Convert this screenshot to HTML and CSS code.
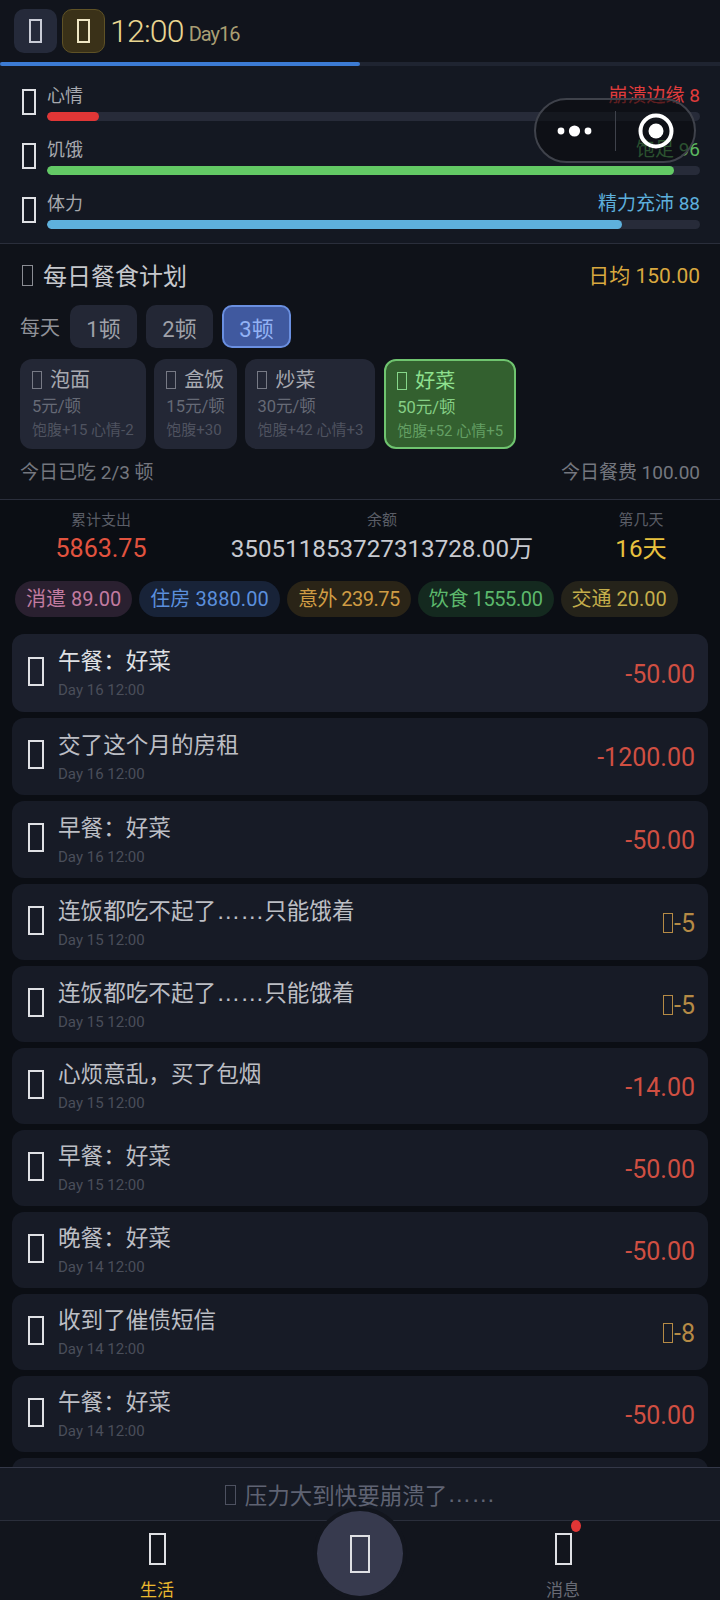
FILE: index.html
```html
<!DOCTYPE html>
<html lang="zh-CN">
<head>
    <meta charset="UTF-8">
    <meta name="viewport" content="width=device-width, initial-scale=1.0">
    <title>生活</title>
    <link rel="stylesheet" href="styles.css">
</head>
<body>
<div class="app">
    <header class="topbar">
        <div class="top-btn"><span class="tofu tofu-top"></span></div>
        <div class="top-btn top-btn-gold"><span class="tofu tofu-top tofu-warm"></span></div>
        <span class="clock">12:00</span>
        <span class="day">Day16</span>
    </header>
    <div class="progress"><div class="progress-fill" style="width: 50%"></div></div>

    <section class="stats">
        <div class="stat">
            <span class="tofu tofu-stat"></span>
            <div class="stat-body">
                <div class="stat-head"><span class="stat-name">心情</span><span class="red">崩溃边缘 8</span></div>
                <div class="bar"><div class="bar-fill fill-red" style="width: 8%"></div></div>
            </div>
        </div>
        <div class="stat">
            <span class="tofu tofu-stat"></span>
            <div class="stat-body">
                <div class="stat-head"><span class="stat-name">饥饿</span><span class="green">饱足 96</span></div>
                <div class="bar"><div class="bar-fill fill-green" style="width: 96%"></div></div>
            </div>
        </div>
        <div class="stat">
            <span class="tofu tofu-stat"></span>
            <div class="stat-body">
                <div class="stat-head"><span class="stat-name">体力</span><span class="blue">精力充沛 88</span></div>
                <div class="bar"><div class="bar-fill fill-blue" style="width: 88%"></div></div>
            </div>
        </div>
    </section>

    <section class="meals">
        <div class="meals-head">
            <h2 class="meals-title"><span class="tofu tofu-title"></span>每日餐食计划</h2>
            <span class="meals-avg">日均 150.00</span>
        </div>
        <div class="freq">
            <span class="freq-label">每天</span>
            <div class="freq-btn">1顿</div>
            <div class="freq-btn">2顿</div>
            <div class="freq-btn freq-on">3顿</div>
        </div>
        <div class="cards">
            <div class="card">
                <div class="card-name"><span class="tofu tofu-card"></span>泡面</div>
                <div class="card-price">5元/顿</div>
                <div class="card-effect">饱腹+15 心情-2</div>
            </div>
            <div class="card">
                <div class="card-name"><span class="tofu tofu-card"></span>盒饭</div>
                <div class="card-price">15元/顿</div>
                <div class="card-effect">饱腹+30</div>
            </div>
            <div class="card">
                <div class="card-name"><span class="tofu tofu-card"></span>炒菜</div>
                <div class="card-price">30元/顿</div>
                <div class="card-effect">饱腹+42 心情+3</div>
            </div>
            <div class="card card-on">
                <div class="card-name"><span class="tofu tofu-card"></span>好菜</div>
                <div class="card-price">50元/顿</div>
                <div class="card-effect">饱腹+52 心情+5</div>
            </div>
        </div>
        <div class="meals-foot">
            <span>今日已吃 2/3 顿</span>
            <span>今日餐费 100.00</span>
        </div>
    </section>

    <section class="summary">
        <div class="sum-col sum-spent">
            <div class="sum-label">累计支出</div>
            <div class="sum-value red-soft">5863.75</div>
        </div>
        <div class="sum-col sum-balance">
            <div class="sum-label">余额</div>
            <div class="sum-value">350511853727313728.00万</div>
        </div>
        <div class="sum-col sum-day">
            <div class="sum-label">第几天</div>
            <div class="sum-value yellow">16天</div>
        </div>
    </section>

    <div class="chips">
        <span class="chip chip-pink">消遣 89.00</span>
        <span class="chip chip-blue">住房 3880.00</span>
        <span class="chip chip-amber">意外 239.75</span>
        <span class="chip chip-green">饮食 1555.00</span>
        <span class="chip chip-olive">交通 20.00</span>
    </div>

    <main class="log">
        <div class="row row-first">
            <span class="tofu tofu-row"></span>
            <div class="row-text"><div class="row-title">午餐：好菜</div><div class="row-time">Day 16 12:00</div></div>
            <span class="row-amt">-50.00</span>
        </div>
        <div class="row row-tall">
            <span class="tofu tofu-row"></span>
            <div class="row-text"><div class="row-title">交了这个月的房租</div><div class="row-time">Day 16 12:00</div></div>
            <span class="row-amt">-1200.00</span>
        </div>
        <div class="row row-tall">
            <span class="tofu tofu-row"></span>
            <div class="row-text"><div class="row-title">早餐：好菜</div><div class="row-time">Day 16 12:00</div></div>
            <span class="row-amt">-50.00</span>
        </div>
        <div class="row">
            <span class="tofu tofu-row"></span>
            <div class="row-text"><div class="row-title">连饭都吃不起了<span class="dots">……</span>只能饿着</div><div class="row-time">Day 15 12:00</div></div>
            <span class="row-amt row-mood"><span class="tofu tofu-mood"></span>-5</span>
        </div>
        <div class="row">
            <span class="tofu tofu-row"></span>
            <div class="row-text"><div class="row-title">连饭都吃不起了<span class="dots">……</span>只能饿着</div><div class="row-time">Day 15 12:00</div></div>
            <span class="row-amt row-mood"><span class="tofu tofu-mood"></span>-5</span>
        </div>
        <div class="row">
            <span class="tofu tofu-row"></span>
            <div class="row-text"><div class="row-title">心烦意乱，买了包烟</div><div class="row-time">Day 15 12:00</div></div>
            <span class="row-amt">-14.00</span>
        </div>
        <div class="row">
            <span class="tofu tofu-row"></span>
            <div class="row-text"><div class="row-title">早餐：好菜</div><div class="row-time">Day 15 12:00</div></div>
            <span class="row-amt">-50.00</span>
        </div>
        <div class="row">
            <span class="tofu tofu-row"></span>
            <div class="row-text"><div class="row-title">晚餐：好菜</div><div class="row-time">Day 14 12:00</div></div>
            <span class="row-amt">-50.00</span>
        </div>
        <div class="row">
            <span class="tofu tofu-row"></span>
            <div class="row-text"><div class="row-title">收到了催债短信</div><div class="row-time">Day 14 12:00</div></div>
            <span class="row-amt row-mood"><span class="tofu tofu-mood"></span>-8</span>
        </div>
        <div class="row">
            <span class="tofu tofu-row"></span>
            <div class="row-text"><div class="row-title">午餐：好菜</div><div class="row-time">Day 14 12:00</div></div>
            <span class="row-amt">-50.00</span>
        </div>
        <div class="row"></div>
    </main>

    <div class="toast"><span class="tofu tofu-toast"></span>压力大到快要崩溃了<span class="dots">……</span></div>

    <nav class="tabs">
        <div class="tab tab-on"><span class="tofu tofu-tab"></span><span class="tab-label">生活</span></div>
        <div class="tab-gap"></div>
        <div class="tab">
            <span class="tofu tofu-tab"></span><span class="tab-label">消息</span>
            <span class="tab-dot"></span>
        </div>
    </nav>
    <div class="tab-center"><span class="tofu tofu-center"></span></div>

    <div class="capsule">
        <svg class="capsule-dots" viewBox="0 0 36 12" width="36" height="12"><circle cx="4" cy="6" r="3.4" fill="#fff"/><circle cx="17.5" cy="6" r="5.6" fill="#fff"/><circle cx="31" cy="6" r="3.4" fill="#fff"/></svg>
        <span class="capsule-line"></span>
        <svg class="capsule-target" viewBox="0 0 36 36" width="36" height="36"><circle cx="18" cy="18" r="15.5" fill="none" stroke="#fff" stroke-width="4"/><circle cx="18" cy="18" r="7.5" fill="#fff"/></svg>
    </div>
</div>
</body>
</html>
```

FILE: styles.css
```css
* {
    box-sizing: border-box;
}
body {
    margin: 0;
    background-color: #0b0e14;
    font-family: Roboto, "Noto Sans CJK SC", sans-serif;
    color: #c8cad0;
}
.app {
    position: relative;
    width: 720px;
    height: 1600px;
    overflow: hidden;
    display: flex;
    flex-direction: column;
    background-color: #0b0e14;
}
.dots {
    font-family: "Liberation Sans", sans-serif;
    font-size: 24px;
}

/* placeholder boxes where the icon font is missing */
.tofu {
    display: inline-block;
    flex: none;
    border: 2px solid #dfe0e4;
}
.tofu-top { width: 13px; height: 24px; border-color: #c9ccd6; }
.tofu-warm { border-color: #efe6c4; }
.tofu-stat { width: 14px; height: 26px; }
.tofu-title { width: 11px; height: 21px; border-color: #8b8d94; border-width: 1.5px; margin: 3px 10px 0 0; }
.tofu-card { width: 10px; height: 18px; border-color: #777a85; border-width: 1.5px; margin-right: 8px; }
.card-on .tofu-card { border-color: #86d68a; }
.tofu-row { width: 16px; height: 29px; margin-top: -6px; }
.tofu-mood { width: 10px; height: 20px; border-color: #b58a45; border-width: 1.5px; margin-right: 1px; }
.tofu-toast { width: 11px; height: 20px; border-color: #4d5160; border-width: 1.5px; margin: 2px 9px 0 0; }
.tofu-tab { width: 17px; height: 32px; }
.tofu-center { width: 20px; height: 38px; }

.topbar {
    height: 62px;
    flex: none;
    display: flex;
    align-items: center;
    padding: 0 14px;
    gap: 5px;
    background-color: #11141c;
}
.top-btn {
    width: 43px;
    height: 44px;
    border-radius: 10px;
    background-color: #252a3a;
    display: flex;
    align-items: center;
    justify-content: center;
}
.top-btn-gold {
    background-color: #3a3118;
    border: 1px solid #5f5226;
}
.clock {
    font-size: 32px;
    font-weight: 300;
    letter-spacing: -0.8px;
    color: #e9d691;
}
.day {
    font-size: 20px;
    letter-spacing: -1px;
    color: #a99e73;
    margin-top: 6px;
}
.progress {
    height: 4px;
    flex: none;
    background-color: #1f2431;
}
.progress-fill {
    height: 100%;
    background-color: #3c7bd4;
    border-radius: 2px;
}

.stats {
    flex: none;
    height: 178px;
    padding: 12px 20px 0 22px;
    background-color: #141822;
    border-bottom: 1px solid #2a2e3b;
    display: flex;
    flex-direction: column;
    gap: 7px;
}
.stat {
    display: flex;
    align-items: center;
    gap: 11px;
    height: 47px;
}
.stat-body {
    flex: 1;
}
.stat-head {
    display: flex;
    justify-content: space-between;
    font-size: 19px;
    line-height: 26px;
    margin-bottom: 3px;
}
.stat-name { color: #a6a8ae; font-size: 18px; }
.red { color: #e03c3c; }
.green { color: #5cb860; }
.blue { color: #5dafdc; }
.bar {
    height: 9px;
    border-radius: 5px;
    background-color: #272b39;
    overflow: hidden;
}
.bar-fill {
    height: 100%;
    border-radius: 5px;
}
.fill-red { background-color: #e03636; }
.fill-green { background-color: #63c965; }
.fill-blue { background-color: #5eb1dd; }

.meals {
    flex: none;
    height: 256px;
    padding: 13px 20px 0 20px;
    background-color: #0f1219;
    border-bottom: 1px solid #2a2e3b;
}
.meals-head {
    display: flex;
    justify-content: space-between;
    align-items: center;
    height: 34px;
}
.meals-title {
    margin: 0 0 0 2px;
    font-size: 24px;
    font-weight: 400;
    color: #c6c8cd;
    display: flex;
    align-items: center;
}
.meals-avg {
    font-size: 21px;
    color: #d9a83f;
}
.freq {
    margin-top: 14px;
    display: flex;
    align-items: center;
    gap: 9px;
}
.freq-label {
    font-size: 20px;
    color: #8f9198;
    margin-right: 1px;
}
.freq-btn {
    width: 67px;
    height: 43px;
    border-radius: 10px;
    background-color: #232735;
    color: #9fa1a9;
    font-size: 22px;
    display: flex;
    align-items: center;
    justify-content: center;
}
.freq-on {
    width: 69px;
    background-color: #40599f;
    border: 2px solid #6a8fe0;
    color: #93b2f5;
}
.cards {
    margin-top: 11px;
    display: flex;
    gap: 8.7px;
}
.card {
    height: 90px;
    padding: 6px 12px 0;
    border-radius: 12px;
    background-color: #232735;
    white-space: nowrap;
}
.card-on {
    padding: 5px 11px 0;
    background-color: #33602f;
    border: 2px solid #6fc46f;
}
.card-name {
    font-size: 20px;
    line-height: 30px;
    color: #a7a9b0;
    display: flex;
    align-items: center;
}
.card-price {
    font-size: 16.5px;
    line-height: 24px;
    color: #666a76;
}
.card-effect {
    font-size: 15px;
    line-height: 22px;
    color: #4f5360;
}
.card-on .card-name { color: #8fe08f; }
.card-on .card-price { color: #85cf85; }
.card-on .card-effect { color: #639f63; }
.meals-foot {
    margin-top: 10px;
    display: flex;
    justify-content: space-between;
    font-size: 19px;
    line-height: 28px;
    color: #74777f;
}

.summary {
    flex: none;
    height: 81px;
    position: relative;
    display: grid;
    grid-template-columns: 202px 360px 158px;
    padding-top: 9px;
    text-align: center;
}
.sum-label {
    font-size: 15px;
    line-height: 22px;
    color: #5a5d66;
}
.sum-value {
    font-size: 24.2px;
    line-height: 36px;
    color: #c8cad0;
}
.sum-spent .sum-value { font-size: 25px; }
.red-soft { color: #e2533f; }
.yellow { color: #e8c13e; }

.chips {
    flex: none;
    display: flex;
    gap: 7px;
    padding: 0 15px;
    height: 36px;
}
.chip {
    height: 36px;
    padding: 0 11px;
    border-radius: 18px;
    font-size: 20px;
    line-height: 36px;
    white-space: nowrap;
}
.chip-pink { background-color: #2a2030; color: #c27ba0; }
.chip-blue { background-color: #182338; color: #5b8fdc; letter-spacing: 0.1px; }
.chip-amber { background-color: #2a2417; color: #cf9c44; letter-spacing: -0.5px; }
.chip-green { background-color: #14291f; color: #5cb86c; letter-spacing: -0.4px; }
.chip-olive { background-color: #25231a; color: #c4ae4b; }

.log {
    flex: 1;
    overflow: hidden;
    margin-top: 17px;
    padding: 0 12px;
    display: flex;
    flex-direction: column;
    gap: 6px;
}
.row {
    flex: none;
    height: 76px;
    padding: 2px 13px 0 16px;
    border-radius: 12px;
    background-color: #171b26;
    display: flex;
    align-items: center;
    gap: 14px;
}
.row-first {
    height: 78px;
    background-color: #1c202d;
}
.row-tall { height: 77px; }
.row-text { flex: 1; }
.row-title {
    font-size: 22.6px;
    line-height: 32px;
    color: #bcbec4;
}
.row-first .row-title { color: #dfe0e4; }
.row-time {
    font-size: 15px;
    line-height: 24px;
    color: #4a4e5a;
}
.row-amt {
    font-size: 25px;
    color: #cf4f42;
}
.row-mood {
    color: #b58a45;
    display: flex;
    align-items: center;
}

.toast {
    flex: none;
    height: 54px;
    background-color: #161a24;
    border-top: 1px solid #343848;
    border-bottom: 1px solid #2a2e3b;
    display: flex;
    align-items: center;
    justify-content: center;
    font-size: 22.5px;
    color: #5f6373;
}
.tabs {
    flex: none;
    height: 79px;
    background-color: #12151d;
    display: grid;
    grid-template-columns: 314px 92px 314px;
}
.tab {
    position: relative;
    display: flex;
    flex-direction: column;
    align-items: center;
    padding-top: 12px;
}
.tab-label {
    font-size: 17px;
    line-height: 22px;
    margin-top: 14px;
    color: #686b75;
}
.tab-on .tab-label { color: #eab92f; }
.tab-dot {
    position: absolute;
    top: -1px;
    left: 165px;
    width: 10px;
    height: 12px;
    border-radius: 50%;
    background-color: #e03636;
}
.tab-center {
    position: absolute;
    left: 313px;
    top: 1507px;
    width: 94px;
    height: 93px;
    border-radius: 50%;
    background-color: #373a4e;
    border: 4px solid #12151d;
    display: flex;
    align-items: center;
    justify-content: center;
}

.capsule {
    position: absolute;
    left: 534px;
    top: 98px;
    width: 162px;
    height: 65px;
    border-radius: 33px;
    border: 2px solid #3f424b;
    background-color: rgba(10, 11, 15, 0.6);
    display: flex;
    align-items: center;
}
.capsule-dots {
    margin-left: 21px;
}
.capsule-line {
    width: 1px;
    height: 40px;
    margin-left: 22px;
    background-color: #3f424b;
}
.capsule-target {
    margin-left: 22px;
}
```
